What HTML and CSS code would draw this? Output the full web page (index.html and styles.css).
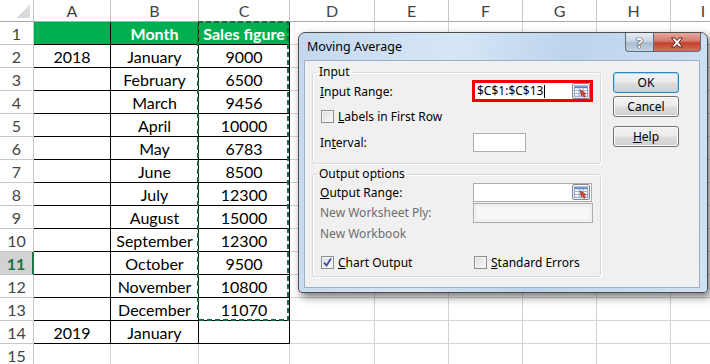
FILE: index.html
```html
<!DOCTYPE html>
<html lang="en">
<head>
    <meta charset="UTF-8">
    <title>Moving Average</title>
    <link rel="stylesheet" href="styles.css">
</head>
<body>
    <div class="workbook">
        <!-- Worksheet -->
        <table class="sheet">
            <colgroup>
                <col class="c-hdr"><col class="c-a"><col class="c-b"><col class="c-c"><col class="c-d">
                <col class="c-n"><col class="c-n"><col class="c-n"><col class="c-n"><col class="c-i">
            </colgroup>
            <tr class="hdr"><th class="corner"></th><th>A</th><th>B</th><th>C</th><th>D</th><th>E</th><th>F</th><th>G</th><th>H</th><th>I</th></tr>
            <tr class="first"><th>1</th><td class="b g"></td><td class="b g">Month</td><td class="b g">Sales figure</td><td></td><td></td><td></td><td></td><td></td><td></td></tr>
            <tr><th>2</th><td class="b">2018</td><td class="b">January</td><td class="b">9000</td><td></td><td></td><td></td><td></td><td></td><td></td></tr>
            <tr><th>3</th><td class="b"></td><td class="b">February</td><td class="b">6500</td><td></td><td></td><td></td><td></td><td></td><td></td></tr>
            <tr><th>4</th><td class="b"></td><td class="b">March</td><td class="b">9456</td><td></td><td></td><td></td><td></td><td></td><td></td></tr>
            <tr><th>5</th><td class="b"></td><td class="b">April</td><td class="b">10000</td><td></td><td></td><td></td><td></td><td></td><td></td></tr>
            <tr><th>6</th><td class="b"></td><td class="b">May</td><td class="b">6783</td><td></td><td></td><td></td><td></td><td></td><td></td></tr>
            <tr><th>7</th><td class="b"></td><td class="b">June</td><td class="b">8500</td><td></td><td></td><td></td><td></td><td></td><td></td></tr>
            <tr><th>8</th><td class="b"></td><td class="b">July</td><td class="b">12300</td><td></td><td></td><td></td><td></td><td></td><td></td></tr>
            <tr><th>9</th><td class="b"></td><td class="b">August</td><td class="b">15000</td><td></td><td></td><td></td><td></td><td></td><td></td></tr>
            <tr><th>10</th><td class="b"></td><td class="b">September</td><td class="b">12300</td><td></td><td></td><td></td><td></td><td></td><td></td></tr>
            <tr><th class="active">11</th><td class="b"></td><td class="b">October</td><td class="b">9500</td><td></td><td></td><td></td><td></td><td></td><td></td></tr>
            <tr><th>12</th><td class="b"></td><td class="b">November</td><td class="b">10800</td><td></td><td></td><td></td><td></td><td></td><td></td></tr>
            <tr><th>13</th><td class="b"></td><td class="b">December</td><td class="b">11070</td><td></td><td></td><td></td><td></td><td></td><td></td></tr>
            <tr><th>14</th><td class="b">2019</td><td class="b">January</td><td class="b"></td><td></td><td></td><td></td><td></td><td></td><td></td></tr>
            <tr><th>15</th><td></td><td></td><td></td><td></td><td></td><td></td><td></td><td></td><td></td><td></td></tr>
        </table>

        <!-- Copy marquee around C1:C13 -->
        <svg class="ants" width="710" height="364">
            <rect x="198" y="22" width="90" height="298" fill="none" stroke="#1a6b3f" stroke-width="2" stroke-dasharray="5 3"/>
        </svg>

        <!-- Moving Average dialog -->
        <div class="dialog">
            <div class="titlebar">
                <span class="title">Moving Average</span>
                <div class="caption-btns">
                    <span class="cap help">?</span>
                    <span class="cap close">
                        <svg width="14" height="11" viewBox="0 0 14 11">
                            <path d="M1.5 1 L5 1 L7 3.5 L9 1 L12.5 1 L8.8 5.5 L12.5 10 L9 10 L7 7.5 L5 10 L1.5 10 L5.2 5.5 Z" fill="#fff" stroke="#5a2420" stroke-width="1" stroke-linejoin="round"/>
                        </svg>
                    </span>
                </div>
            </div>

            <div class="client">
                <div class="groups">
                    <fieldset class="group group-input">
                        <legend>Input</legend>
                        <div class="row row-range">
                            <label><u>I</u>nput Range:</label>
                            <div class="highlight">
                                <div class="field range-field">
                                    <span class="value">$C$1:$C$13</span><span class="caret"></span>
                                    <span class="refbtn">
                                        <svg width="17" height="15" viewBox="0 0 17 15">
                                            <rect x="1.5" y="1.5" width="14" height="11" fill="#fff" stroke="#7b9ccc"/>
                                            <rect x="2" y="2" width="13" height="2" fill="#5b83c6"/>
                                            <path d="M2 6.5 H15 M2 9.5 H15 M6.5 4 V12.5 M11 4 V12.5" stroke="#8eaad6" stroke-width="1"/>
                                            <path d="M7.5 5.5 L14 10 L11.8 10.4 L13 13 L11.6 13.5 L10.4 10.9 L8.8 12.3 Z" fill="#d9442c" stroke="#8c2414" stroke-width="0.6"/>
                                        </svg>
                                    </span>
                                </div>
                            </div>
                        </div>
                        <div class="row row-check">
                            <label class="check"><span class="box"></span><span><u>L</u>abels in First Row</span></label>
                        </div>
                        <div class="row row-interval">
                            <label>In<u>t</u>erval:</label>
                            <div class="field small-field"></div>
                        </div>
                    </fieldset>

                    <fieldset class="group group-output">
                        <legend>Output options</legend>
                        <div class="row row-out">
                            <label><u>O</u>utput Range:</label>
                            <div class="field out-field">
                                <span class="refbtn">
                                    <svg width="17" height="15" viewBox="0 0 17 15">
                                        <rect x="1.5" y="1.5" width="14" height="11" fill="#fff" stroke="#7b9ccc"/>
                                        <rect x="2" y="2" width="13" height="2" fill="#5b83c6"/>
                                        <path d="M2 6.5 H15 M2 9.5 H15 M6.5 4 V12.5 M11 4 V12.5" stroke="#8eaad6" stroke-width="1"/>
                                        <path d="M7.5 5.5 L14 10 L11.8 10.4 L13 13 L11.6 13.5 L10.4 10.9 L8.8 12.3 Z" fill="#d9442c" stroke="#8c2414" stroke-width="0.6"/>
                                    </svg>
                                </span>
                            </div>
                        </div>
                        <div class="row row-ply">
                            <label class="disabled">New Worksheet Ply:</label>
                            <div class="field disabled-field"><span></span></div>
                        </div>
                        <div class="row row-book">
                            <label class="disabled">New Workbook</label>
                        </div>
                        <div class="row row-chart">
                            <label class="check"><span class="box checked">
                                <svg width="11" height="11" viewBox="0 0 11 11"><path d="M2 5.5 L4.5 8.5 L9 1.5" fill="none" stroke="#3a4f9a" stroke-width="1.8"/></svg>
                            </span><span><u>C</u>hart Output</span></label>
                            <label class="check"><span class="box"></span><span><u>S</u>tandard Errors</span></label>
                        </div>
                    </fieldset>
                </div>

                <div class="buttons">
                    <button class="btn default">OK</button>
                    <button class="btn">Cancel</button>
                    <button class="btn btn-help"><u>H</u>elp</button>
                </div>
            </div>
        </div>
    </div>
</body>
</html>
```

FILE: styles.css
```css
body {
    margin: 0;
    background: #fff;
    font-family: Lato, "Liberation Sans", sans-serif;
    color: #000;
}

.workbook {
    position: relative;
    width: 710px;
    height: 364px;
    overflow: hidden;
}

/* Worksheet grid */
.sheet {
    border-collapse: separate;
    border-spacing: 0;
    table-layout: fixed;
    width: 710px;
}

.c-hdr { width: 34px; }
.c-a { width: 77px; }
.c-b { width: 88px; }
.c-c { width: 91px; }
.c-d { width: 85px; }
.c-n { width: 74px; }
.c-i { width: 65px; }

.sheet th,
.sheet td {
    box-sizing: border-box;
    height: 23px;
    padding: 0;
    border-right: 1px solid #d4d4d4;
    border-bottom: 1px solid #d4d4d4;
    text-align: center;
    font-size: 16px;
    font-weight: normal;
    white-space: nowrap;
    overflow: hidden;
}

.sheet th {
    color: #444;
    border-color: #c6c6c6;
}

.sheet .hdr th {
    height: 22px;
    border-bottom-color: #ababab;
}

.sheet .corner {
    background: linear-gradient(135deg, transparent 50%, #dadada 50%) no-repeat right 3px bottom 3px / 14px 14px;
}

.sheet th.active {
    background: #d2d2d2;
    color: #217346;
    font-weight: bold;
    border-right: 2px solid #217346;
}

.sheet td.b {
    border-right-color: #000;
    border-bottom-color: #000;
}

.sheet td.g {
    background: #00b050;
    color: #fff;
    font-weight: bold;
}

.ants {
    position: absolute;
    left: 0;
    top: 0;
    pointer-events: none;
}

/* Dialog window */
.dialog {
    position: absolute;
    left: 298px;
    top: 32px;
    width: 410px;
    height: 261px;
    box-sizing: border-box;
    display: flex;
    flex-direction: column;
    border: 1px solid #4f4f4f;
    border-radius: 7px 7px 4px 4px;
    background: linear-gradient(100deg, #c3d8ee 0%, #d6e6f6 35%, #bcd4ec 60%, #d0e2f4 100%);
    box-shadow: 3px 4px 9px rgba(0, 0, 0, 0.55);
    font-family: "Noto Sans", "Open Sans", sans-serif;
    font-size: 12px;
}

.titlebar {
    display: flex;
    justify-content: space-between;
    height: 27px;
    padding: 0 6px 0 8px;
}

.title {
    font-size: 12.5px;
    line-height: 28px;
    color: #000;
}

.caption-btns {
    display: flex;
}

.cap {
    display: flex;
    align-items: center;
    justify-content: center;
    height: 18px;
    border: 1px solid #5d6b7c;
    border-top: none;
}

.cap.help {
    width: 27px;
    border-radius: 0 0 0 4px;
    background: linear-gradient(#e4ebf3 0%, #cbd7e4 45%, #a9bcd1 55%, #c3d3e4 100%);
    color: #fff;
    font-weight: bold;
    font-size: 14px;
    text-shadow: 0 0 1px #333, 0 0 1px #333, 0 0 1px #333;
}

.cap.close {
    width: 46px;
    border-left: none;
    border-radius: 0 0 4px 0;
    background: linear-gradient(#e6a99f 0%, #d77868 45%, #c2402c 55%, #d7705c 100%);
}

.client {
    flex: 1;
    display: flex;
    margin: 0 7px 4px 5px;
    border: 1px solid #9fb0c2;
    background: #f0f0f0;
}

.groups {
    width: 289px;
    margin-left: 7px;
    padding-top: 3px;
}

.group {
    margin: 0;
    padding: 0 7px;
    border: 1px solid #d5dadf;
    border-radius: 3px;
    box-shadow: inset 1px 1px 0 #fff, 1px 1px 0 #fff;
}

.group legend {
    padding: 0 2px;
    margin-left: -3px;
    line-height: 16px;
}

.group-input {
    padding-bottom: 9px;
}

.group-output {
    margin-top: 2px;
    padding-bottom: 4px;
}

.row {
    display: grid;
    grid-template-columns: 153px 1fr;
    align-items: center;
}

.row label {
    white-space: nowrap;
}

.row-range { height: 22px; }
.row-check { height: 28px; }
.row-interval { height: 24px; }
.row-out { height: 20px; }
.row-ply { height: 21px; }
.row-book { height: 20px; }
.row-chart { height: 20px; margin-top: 9px; }

.disabled {
    color: #6d6d6d;
}

.check {
    display: flex;
    align-items: center;
    gap: 4px;
    margin-left: 1px;
}

.box {
    width: 13px;
    height: 13px;
    box-sizing: border-box;
    border: 1px solid #8e8f8f;
    background: linear-gradient(135deg, #dcdcdc, #fbfbfb);
    box-shadow: inset 0 0 0 1px #f4f4f4;
    display: flex;
    align-items: center;
    justify-content: center;
}

.field {
    box-sizing: border-box;
    border: 1px solid #abadb3;
    background: #fff;
}

.highlight {
    width: 121px;
    margin-left: -1px;
    box-sizing: border-box;
    border: 3px solid #f00000;
}

.range-field {
    height: 16px;
    border: none;
    display: flex;
    align-items: center;
    padding-left: 2px;
}

.range-field .value {
    line-height: 16px;
}

.caret {
    width: 1px;
    height: 13px;
    background: #000;
    margin-left: 1px;
}

.refbtn {
    margin-left: auto;
    width: 18px;
    height: 16px;
    box-sizing: border-box;
    display: flex;
    align-items: center;
    justify-content: center;
    border: 1px solid #8a8a8a;
    border-radius: 2px;
    background: linear-gradient(#fdfdfd, #e4e4e4);
}

.small-field {
    width: 53px;
    height: 19px;
}

.out-field {
    width: 119px;
    height: 19px;
    display: flex;
    align-items: center;
    justify-content: flex-end;
    padding-right: 1px;
}

.disabled-field {
    width: 120px;
    height: 20px;
    padding: 3px;
    background: #f0f0f0;
}

.disabled-field span {
    display: block;
    height: 100%;
    background: #f8f8f8;
}

/* Dialog buttons */
.buttons {
    display: flex;
    flex-direction: column;
    width: 66px;
    margin: 11px 0 0 12px;
}

.btn {
    height: 21px;
    padding: 0;
    margin-bottom: 3px;
    border: 1px solid #707070;
    border-radius: 3px;
    background: linear-gradient(#f2f2f2 0%, #ebebeb 49%, #dddddd 51%, #cfcfcf 100%);
    box-shadow: inset 0 0 0 1px #fcfcfc;
    font: inherit;
    color: #000;
}

.btn.default {
    border-color: #3c7fb1;
    box-shadow: inset 0 0 0 1px #9ddcf8;
}

.btn-help {
    margin-top: 6px;
}
```
